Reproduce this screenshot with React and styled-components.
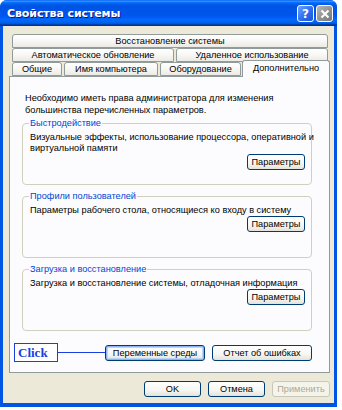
import styled, { createGlobalStyle } from "styled-components";

const GlobalStyle = createGlobalStyle`
  html, body {
    margin: 0;
    padding: 0;
    background: #ffffff;
  }
  body {
    font-family: "Liberation Sans", Arial, sans-serif;
    font-size: 9.2px;
    color: #000;
  }
`;

const Window = styled.div`
  width: 337px;
  height: 407px;
  box-sizing: border-box;
  display: flex;
  flex-direction: column;
  background: #0055e5;
  border-radius: 7px 7px 0 0;
  overflow: hidden;
`;

const TitleBar = styled.div`
  height: 26px;
  flex: none;
  display: flex;
  align-items: center;
  justify-content: space-between;
  padding: 0 4px 0 7px;
  background: linear-gradient(
    to bottom,
    #0058ee 0%,
    #3593ff 4%,
    #288eff 6%,
    #127dff 8%,
    #036ffc 10%,
    #0262ee 14%,
    #0057e5 20%,
    #0054e3 24%,
    #0055eb 56%,
    #005bf5 66%,
    #026afe 76%,
    #0062ef 86%,
    #0052d6 92%,
    #0040ab 94%,
    #003092 100%
  );
`;

const Title = styled.span`
  color: #fff;
  font-family: "DejaVu Sans", sans-serif;
  font-weight: bold;
  font-size: 11px;
  letter-spacing: -0.1px;
  text-shadow: 1px 1px 0 #0a1883;
`;

const Caption = styled.div`
  display: flex;
  gap: 2px;
  margin-top: 1px;
`;

const CapButton = styled.div`
  width: 17px;
  height: 17px;
  box-sizing: border-box;
  border: 1px solid #fff;
  border-radius: 3px;
  display: grid;
  place-items: center;
  color: #fff;
  font-family: "DejaVu Sans", sans-serif;
  font-weight: bold;
  font-size: 12px;
  background: ${(p) =>
    p.$grey
      ? "linear-gradient(135deg, #b8b8b8 0%, #8e8e8e 60%, #777 100%)"
      : "linear-gradient(135deg, #6ea4ff 0%, #2c6df0 55%, #1b55d8 100%)"};
`;

const Body = styled.div`
  flex: 1;
  margin: 0 3px 4px 3px;
  background: #ece9d8;
  padding: 8px 4px 0 6px;
  display: flex;
  flex-direction: column;
`;

const TabStrip = styled.div`
  display: flex;
  flex-direction: column;
  padding: 0 2px 0 3px;
  position: relative;
  z-index: 1;
`;

const TabRow = styled.div`
  display: flex;
  gap: 2px;
  height: 14px;
  align-items: flex-end;
`;

const Tab = styled.div`
  flex: ${(p) => (p.$w ? `0 0 ${p.$w}px` : "1")};
  height: ${(p) => (p.$active ? "17px" : "14px")};
  margin: ${(p) => (p.$active ? "0 -2px -1px -1px" : "0")};
  box-sizing: border-box;
  border: 1px solid #919b9c;
  border-bottom: ${(p) => (p.$active ? "none" : "1px solid #919b9c")};
  border-radius: 3px 3px 0 0;
  background: ${(p) =>
    p.$active
      ? "#fcfcfe"
      : "linear-gradient(to bottom, #ffffff 0%, #f7f7f4 50%, #ebeae5 100%)"};
  display: flex;
  align-items: center;
  justify-content: center;
  white-space: nowrap;
  line-height: 12px;
  padding-bottom: ${(p) => (p.$active ? "3px" : "0")};
`;

const Panel = styled.div`
  height: 297px;
  box-sizing: border-box;
  border: 1px solid #919b9c;
  background: #fcfcfe;
  padding: 15px 17px 0 12px;
  display: flex;
  flex-direction: column;
`;

const Intro = styled.p`
  margin: 0 0 1px 3px;
  line-height: 12px;
`;

const Group = styled.fieldset`
  margin: 0 0 5px 0;
  height: 68px;
  box-sizing: border-box;
  border: 1px solid #d0d0bf;
  border-radius: 4px;
  padding: 3px 6px 8px 7px;
  display: flex;
  flex-direction: column;
  min-width: 0;
`;

const Legend = styled.legend`
  color: #0046d5;
  padding: 0 1px;
  margin-left: -1px;
  line-height: 12px;
`;

const GroupText = styled.div`
  line-height: 11px;
  white-space: nowrap;
`;

const Button = styled.button`
  font: inherit;
  font-size: 9.2px;
  width: ${(p) => p.$w || 58}px;
  height: 16px;
  padding: 0;
  box-sizing: border-box;
  border: 1px solid #003c74;
  border-radius: 3px;
  color: ${(p) => (p.disabled ? "#aca899" : "#000")};
  border-color: ${(p) => (p.disabled ? "#c9c7ba" : "#003c74")};
  background: ${(p) =>
    p.disabled
      ? "#f5f4ea"
      : "linear-gradient(to bottom, #ffffff 0%, #f6f6f2 60%, #e3e2da 100%)"};
  box-shadow: ${(p) =>
    p.$focus ? "inset 0 0 0 1px #8cb4f2, inset 0 0 0 2px #bcd4f6" : "none"};
  align-self: ${(p) => (p.$end ? "flex-end" : "auto")};
  margin-top: ${(p) => (p.$end ? "auto" : "0")};
`;

const ExtraRow = styled.div`
  display: flex;
  align-items: center;
  margin: 7px 0 0 -8px;
  gap: 7px;
`;

const Callout = styled.div`
  display: flex;
  align-items: center;
  flex: 1;
`;

const CalloutBox = styled.div`
  width: 44px;
  height: 19px;
  box-sizing: border-box;
  border: 1px solid #1a3fe0;
  color: #1a3fe0;
  font-family: "Liberation Serif", serif;
  font-weight: bold;
  font-size: 13px;
  line-height: 17px;
  padding-left: 3px;
  background: #fff;
`;

const Leader = styled.div`
  flex: 1;
  height: 1px;
  background: #1a3fe0;
  margin-right: -7px;
`;

const Footer = styled.div`
  display: flex;
  justify-content: flex-end;
  gap: 7px;
  margin-top: 8px;
`;

const CloseIcon = () => (
  <svg width="10" height="10" viewBox="0 0 10 10">
    <path d="M1.5 1.5 L8.5 8.5 M8.5 1.5 L1.5 8.5" stroke="#fff" strokeWidth="2" />
  </svg>
);

const groups = [
  {
    label: "Быстродействие",
    lines: [
      "Визуальные эффекты, использование процессора, оперативной и",
      "виртуальной памяти",
    ],
  },
  {
    label: "Профили пользователей",
    lines: ["Параметры рабочего стола, относящиеся ко входу в систему"],
  },
  {
    label: "Загрузка и восстановление",
    lines: ["Загрузка и восстановление системы, отладочная информация"],
  },
];

export default function App() {
  return (
    <>
      <GlobalStyle />
      <Window>
        <TitleBar>
          <Title>Свойства системы</Title>
          <Caption>
            <CapButton>?</CapButton>
            <CapButton $grey>
              <CloseIcon />
            </CapButton>
          </Caption>
        </TitleBar>
        <Body>
          <TabStrip>
            <TabRow>
              <Tab>Восстановление системы</Tab>
            </TabRow>
            <TabRow>
              <Tab $w={162}>Автоматическое обновление</Tab>
              <Tab>Удаленное использование</Tab>
            </TabRow>
            <TabRow>
              <Tab $w={50}>Общие</Tab>
              <Tab $w={94}>Имя компьютера</Tab>
              <Tab $w={81}>Оборудование</Tab>
              <Tab $active>Дополнительно</Tab>
            </TabRow>
          </TabStrip>
          <Panel>
            <Intro>
              Необходимо иметь права администратора для изменения
              <br />
              большинства перечисленных параметров.
            </Intro>
            {groups.map((g) => (
              <Group key={g.label}>
                <Legend>{g.label}</Legend>
                {g.lines.map((line) => (
                  <GroupText key={line}>{line}</GroupText>
                ))}
                <Button $end>Параметры</Button>
              </Group>
            ))}
            <ExtraRow>
              <Callout>
                <CalloutBox>Click</CalloutBox>
                <Leader />
              </Callout>
              <Button $w={100} $focus>
                Переменные среды
              </Button>
              <Button $w={100}>Отчет об ошибках</Button>
            </ExtraRow>
          </Panel>
          <Footer>
            <Button $w={57}>OK</Button>
            <Button $w={57}>Отмена</Button>
            <Button $w={58} disabled>
              Применить
            </Button>
          </Footer>
        </Body>
      </Window>
    </>
  );
}
